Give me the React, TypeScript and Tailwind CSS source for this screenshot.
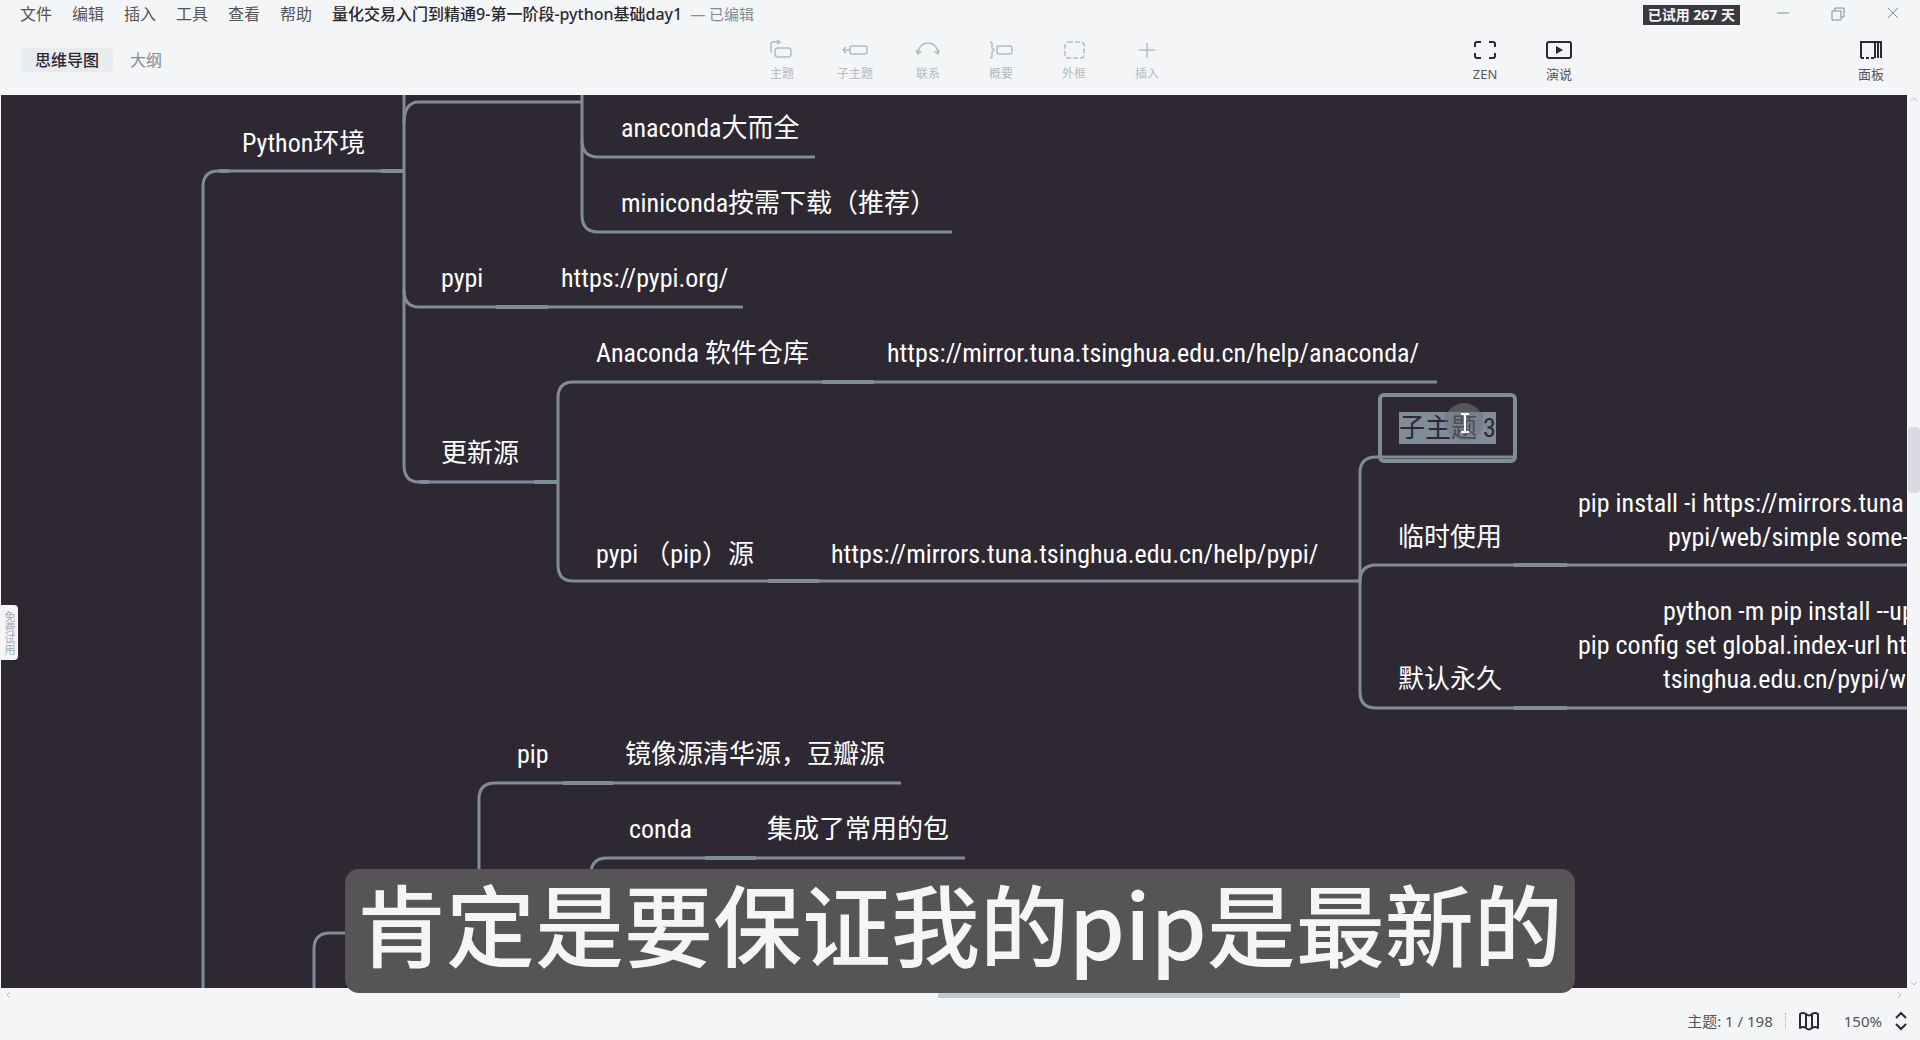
import React from "react";

const CANVAS_TEXT =
  "absolute whitespace-nowrap text-[26px] leading-[34px] text-white";

type Topic = { text: string; x: number; y: number };

const topics: Topic[] = [
  { text: "Python环境", x: 241, y: 31 },
  { text: "anaconda大而全", x: 620, y: 16 },
  { text: "miniconda按需下载（推荐）", x: 620, y: 91 },
  { text: "pypi", x: 440, y: 166 },
  { text: "https://pypi.org/", x: 560, y: 166 },
  { text: "Anaconda 软件仓库", x: 595, y: 241 },
  { text: "https://mirror.tuna.tsinghua.edu.cn/help/anaconda/", x: 886, y: 241 },
  { text: "更新源", x: 440, y: 341 },
  { text: "pypi （pip）源", x: 595, y: 442 },
  { text: "https://mirrors.tuna.tsinghua.edu.cn/help/pypi/", x: 830, y: 442 },
  { text: "临时使用", x: 1397, y: 425 },
  { text: "pip install -i https://mirrors.tuna", x: 1577, y: 391 },
  { text: "pypi/web/simple some-", x: 1667, y: 425 },
  { text: "默认永久", x: 1397, y: 567 },
  { text: "python -m pip install --up", x: 1662, y: 499 },
  { text: "pip config set global.index-url ht", x: 1577, y: 533 },
  { text: "tsinghua.edu.cn/pypi/w", x: 1662, y: 567 },
  { text: "pip", x: 516, y: 642 },
  { text: "镜像源清华源，豆瓣源", x: 624, y: 642 },
  { text: "conda", x: 628, y: 717 },
  { text: "集成了常用的包", x: 766, y: 717 },
];

function Branches() {
  return (
    <svg
      className="absolute left-0 top-0 h-full w-full"
      fill="none"
      stroke="#818c99"
      strokeWidth="3"
      aria-hidden="true"
    >
      <path d="M202 893V92Q202 76 217 76H402" />
      <path d="M403 0V370Q403 387 418 387H556" />
      <path d="M403 28Q403 7 418 7H581M581 0V120Q581 137 597 137H951" />
      <path d="M581 45Q581 62 597 62H814" />
      <path d="M403 195Q403 212 418 212H742" />
      <path d="M557 387V303Q557 287 572 287H1436" />
      <path d="M557 387V470Q557 486 572 486H1359" />
      <path d="M1359 486V378Q1359 362 1375 362H1513" />
      <path d="M1359 486V597Q1359 613 1375 613H1910" />
      <path d="M1359 487Q1359 470 1375 470H1910" />
      <path d="M478 893V704Q478 688 494 688H900" />
      <path d="M590 893V779Q590 763 606 763H964" />
      <path d="M313 893V854Q313 838 329 838H400" />
      <path
        strokeWidth="4"
        d="M495 212H547M821 287H873M767 486H818M1513 470H1566M1513 613H1566M562 688H612M704 763H755M218 76H228M380 76H402M418 387H428M533 387H556"
      />
    </svg>
  );
}

function Tool({
  label,
  children,
  muted,
}: {
  label: string;
  children: React.ReactNode;
  muted?: boolean;
}) {
  return (
    <button
      className={
        muted
          ? "flex w-[73px] flex-col items-center gap-1 text-[#b4bbc3]"
          : "flex w-[74px] flex-col items-center gap-1 text-[#2d2832]"
      }
    >
      <svg
        width="26"
        height="24"
        viewBox="0 0 26 24"
        fill="none"
        stroke="currentColor"
        strokeWidth={muted ? 1.5 : 2}
        aria-hidden="true"
      >
        {children}
      </svg>
      <span
        className={
          muted
            ? "text-[12px] leading-[16px]"
            : "text-[13px] leading-[16px] text-[#565456]"
        }
      >
        {label}
      </span>
    </button>
  );
}

function ScrollArrow({ name, d }: { name: string; d: string }) {
  return (
    <button aria-label={name} className="size-2 shrink-0 text-[#b4bbc3]">
      <svg
        className="block"
        width="8"
        height="8"
        viewBox="0 0 8 8"
        fill="none"
        stroke="currentColor"
      >
        <path d={d} />
      </svg>
    </button>
  );
}

function Header() {
  return (
    <header className="h-[95px] shrink-0">
      <div className="flex h-7 items-center pl-5 text-[16px]">
        <nav className="flex gap-5 text-[#565456]">
          {["文件", "编辑", "插入", "工具", "查看", "帮助"].map((m) => (
            <button key={m}>{m}</button>
          ))}
        </nav>
        <h1 className="ml-5 font-medium text-[#2d2832]">
          量化交易入门到精通9-第一阶段-python基础day1
        </h1>
        <span className="ml-2 text-[15px] text-[#818c99]">— 已编辑</span>
        <span className="ml-auto mt-[2px] bg-[#3c3840] px-[5px] text-[14px] font-bold leading-5 text-[#f3f5f7]">
          已试用 267 天
        </span>
        <div className="ml-[15px] flex text-[#818c99]">
          {[
            ["最小化", "M3 8H15"],
            ["还原", "M3 6H12V15H3ZM6 6V3H15V12H12"],
            ["关闭", "M4 3L14 13M14 3L4 13"],
          ].map(([name, d]) => (
            <button
              key={name}
              aria-label={name}
              className="flex w-[55px] justify-center"
            >
              <svg width="18" height="18" fill="none" stroke="currentColor">
                <path d={d} />
              </svg>
            </button>
          ))}
        </div>
      </div>
      <div className="flex h-[67px] items-start pl-[21px] pt-[10px]">
        <div className="flex flex-1 items-center pt-[10px] text-[16px]">
          <button className="rounded bg-[#e9ecef] px-[14px] text-[16px] font-medium leading-6 text-[#2d2832]">
            思维导图
          </button>
          <button className="ml-[17px] text-[#818c99]">大纲</button>
        </div>
        <div className="flex">
          <Tool muted label="主题">
            <path d="M7 10H19a3 3 0 0 1 3 3v3a3 3 0 0 1-3 3H9a3 3 0 0 1-3-3v-3a3 3 0 0 1 3-3M2 15V6a2 2 0 0 1 2-2h7M8 2l3 2-3 2" />
          </Tool>
          <Tool muted label="子主题">
            <rect x="8" y="8" width="17" height="8" rx="2" />
            <path d="M8 12H1M4 9L1 12l3 3" />
          </Tool>
          <Tool muted label="联系">
            <path d="M3 15a10 10 0 0 1 20 0M1 12l2 4 3-3M19 13l4 3 1-4" />
          </Tool>
          <Tool muted label="概要">
            <rect x="9" y="8" width="15" height="8" rx="2" />
            <path d="M2 4q2 0 2 2v4l2 2-2 2v4q0 2-2 2" />
          </Tool>
          <Tool muted label="外框">
            <rect x="4" y="4" width="19" height="16" rx="3" strokeDasharray="5 2" />
          </Tool>
          <Tool muted label="插入">
            <path d="M13 5v15M5 12h16" />
          </Tool>
        </div>
        <div className="flex flex-1 justify-end pr-3">
          <Tool label="ZEN">
            <path d="M3 9V6a2 2 0 0 1 2-2h4M17 4h4a2 2 0 0 1 2 2v3M23 15v3a2 2 0 0 1-2 2h-4M9 20H5a2 2 0 0 1-2-2v-3" />
          </Tool>
          <Tool label="演说">
            <rect x="1" y="4" width="24" height="16" rx="2" />
            <path d="M10 8v8l7-4z" fill="currentColor" stroke="none" />
          </Tool>
          <div className="ml-[238px]">
            <Tool label="面板">
              <path d="M3 20V4h20v16M17 4v16M20 4v16" />
              <path d="M3 20h14" strokeDasharray="3 2" />
            </Tool>
          </div>
        </div>
      </div>
    </header>
  );
}

export default function App() {
  return (
    <div className="flex h-screen flex-col overflow-hidden bg-[#f3f5f7] font-['Noto_Sans','Noto_Sans_CJK_SC',sans-serif]">
      <Header />
      <div className="flex min-h-0 flex-1">
        <main className="relative ml-px min-w-0 flex-1">
          <div className="absolute inset-0 overflow-hidden bg-[#2d2832] font-['Roboto_Condensed','Liberation_Sans_Narrow','Noto_Sans_CJK_SC',sans-serif]">
            <Branches />
            {topics.map((t) => (
              <span
                key={t.text}
                className={CANVAS_TEXT}
                style={{ left: t.x, top: t.y }}
              >
                {t.text}
              </span>
            ))}
            <div className="absolute left-[1377px] top-[298px] h-[70px] w-[139px] rounded-md border-4 border-[#818c99]">
              <span className="absolute left-[63px] top-[6px] size-[38px] rounded-full bg-[#565456]" />
              <span className="absolute left-[17px] top-[15px] whitespace-nowrap bg-[#818c99] text-[26px] leading-8 text-[#2d2832]">
                子主题 3
              </span>
              <span className="absolute left-[63px] top-[15px] h-[29px] w-[38px] rounded-b-full bg-[#6f747c]/50" />
              <svg
                className="absolute left-[77px] top-[16px]"
                width="12"
                height="20"
                fill="none"
                stroke="#fff"
                strokeWidth="2"
                aria-hidden="true"
              >
                <path d="M2 1h3l1 1 1-1h3M6 2v16M2 19h3l1-1 1 1h3" />
              </svg>
            </div>
            <button className="absolute left-0 top-[510px] flex h-[55px] w-[17px] items-center justify-center rounded-r bg-[#f3f5f7] font-['Noto_Sans_CJK_SC',sans-serif] text-[11px] leading-none text-[#a3abb5] [writing-mode:vertical-rl]">
              免费试用
            </button>
          </div>
          <p className="absolute left-[344px] top-[774px] z-10 h-[124px] whitespace-nowrap rounded-[14px] bg-[#565456] px-3 font-['Noto_Sans_CJK_SC',sans-serif] text-[89px] font-medium leading-[106px] text-[#f3f5f7]">
            肯定是要保证我的pip是最新的
          </p>
        </main>
        <div className="flex w-[13px] flex-col items-center">
          <ScrollArrow name="向上滚动" d="M1 6l3-3 3 3" />
          <div className="mt-[324px] h-[66px] w-3 rounded-sm bg-[#d8dce1]" />
          <div className="flex-1" />
          <ScrollArrow name="向下滚动" d="M1 2l3 3 3-3" />
        </div>
      </div>
      <div className="flex h-[14px] items-center justify-between pl-1 pr-4">
        <ScrollArrow name="向左滚动" d="M6 1L3 4l3 3" />
        <div className="ml-[430px] h-[6px] w-[462px] bg-[#c4cad1]" />
        <ScrollArrow name="向右滚动" d="M2 1l3 3-3 3" />
      </div>
      <footer className="flex h-[38px] items-center justify-end pr-3 text-[15px] text-[#565456]">
        <span>主题: 1 / 198</span>
        <span className="mx-3 h-4 border-l border-dotted border-[#a3abb5]" />
        <svg width="22" height="20" viewBox="0 0 22 20" fill="none" stroke="#2d2832" strokeWidth="2" strokeLinejoin="round" aria-hidden="true">
          <path d="M2 3q3-2 6 0v14q-3-2-6 0zM14 3q3-2 6 0v14q-3-2-6 0zM8 3q3 3 6 0M8 17q3 3 6 0" />
        </svg>
        <span className="ml-6">150%</span>
        <svg className="ml-3" width="14" height="20" viewBox="0 0 14 20" fill="none" stroke="#2d2832" strokeWidth="2" aria-hidden="true">
          <path d="M2 7l5-5 5 5M2 13l5 5 5-5" />
        </svg>
      </footer>
    </div>
  );
}
